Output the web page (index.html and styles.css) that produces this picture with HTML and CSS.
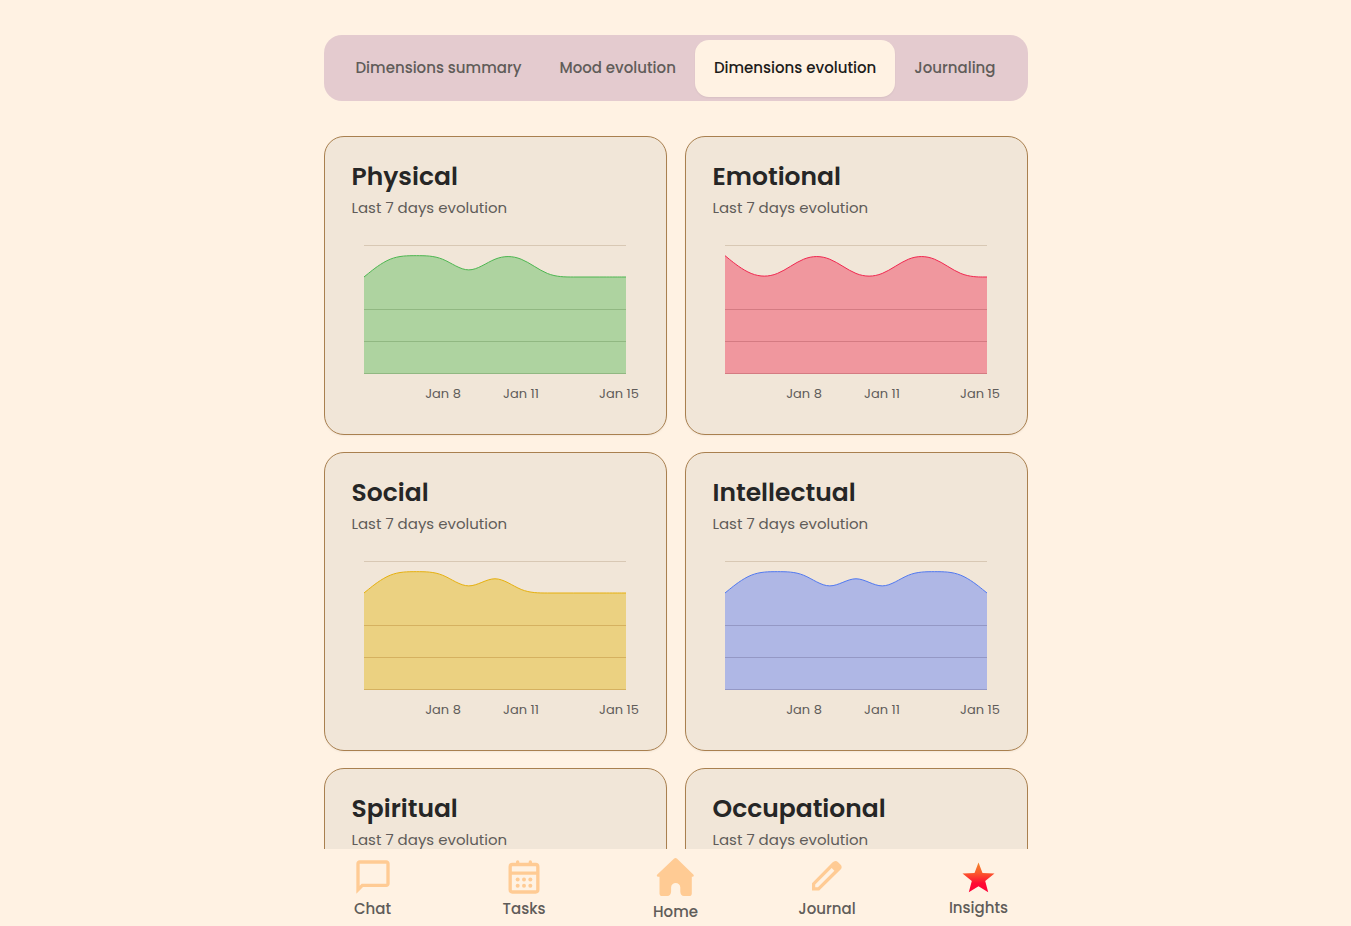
FILE: index.html
```html
<!DOCTYPE html>
<html lang="en">
<head>
<meta charset="utf-8">
<meta name="viewport" content="width=device-width, initial-scale=1">
<title>Insights</title>
<link rel="stylesheet" href="styles.css">
</head>
<body>
<main class="content">
  <div class="tabs" role="tablist">
    <button class="tab" role="tab" aria-selected="false">Dimensions summary</button>
    <button class="tab" role="tab" aria-selected="false">Mood evolution</button>
    <button class="tab tab-active" role="tab" aria-selected="true">Dimensions evolution</button>
    <button class="tab" role="tab" aria-selected="false">Journaling</button>
  </div>
  <div class="cards">
    <section class="card green">
      <h2 class="card-title">Physical</h2>
      <p class="card-subtitle">Last 7 days evolution</p>
      <svg class="chart" viewBox="0 0 287 174" data-values="9,11,11,11,9,11,11,9,9,9,9"></svg>
    </section>
    <section class="card red">
      <h2 class="card-title">Emotional</h2>
      <p class="card-subtitle">Last 7 days evolution</p>
      <svg class="chart" viewBox="0 0 287 174" data-values="11,9,9,11,11,9,9,11,11,9,9"></svg>
    </section>
    <section class="card yellow">
      <h2 class="card-title">Social</h2>
      <p class="card-subtitle">Last 7 days evolution</p>
      <svg class="chart" viewBox="0 0 287 174" data-values="9,11,11,11,9,11,9,9,9,9,9"></svg>
    </section>
    <section class="card blue">
      <h2 class="card-title">Intellectual</h2>
      <p class="card-subtitle">Last 7 days evolution</p>
      <svg class="chart" viewBox="0 0 287 174" data-values="9,11,11,11,9,11,9,11,11,11,9"></svg>
    </section>
    <section class="card green">
      <h2 class="card-title">Spiritual</h2>
      <p class="card-subtitle">Last 7 days evolution</p>
    </section>
    <section class="card red">
      <h2 class="card-title">Occupational</h2>
      <p class="card-subtitle">Last 7 days evolution</p>
    </section>
  </div>
</main>
<nav class="bottom-nav">
  <div class="nav-inner">
    <a class="nav-item" href="#chat">
      <svg class="icon" viewBox="0 0 24 24"><path fill="currentColor" d="M20 2H4c-1.100 0-2 .9-2 2v18l4-4h14c1.100 0 2-.9 2-2V4c0-1.100-.9-2-2-2zm0 14H5.200L4 17.200V4h16v12z"/></svg>
      <span>Chat</span>
    </a>
    <a class="nav-item" href="#tasks">
      <svg class="icon" viewBox="0 0 24 24"><path fill="none" stroke="currentColor" stroke-width="2" stroke-linecap="round" d="M5 4.500h14a1.300 1.300 0 0 1 1.300 1.300v13.900a1.300 1.300 0 0 1-1.300 1.300H5a1.300 1.300 0 0 1-1.300-1.300V5.800A1.300 1.300 0 0 1 5 4.500zM4 9.700h16M8.200 3v1.500M15.800 3v1.500"/><g fill="currentColor"><circle cx="8.200" cy="13.500" r="1.200"/><circle cx="12" cy="13.500" r="1.200"/><circle cx="15.800" cy="13.500" r="1.200"/><circle cx="8.200" cy="17.300" r="1.200"/><circle cx="12" cy="17.300" r="1.200"/><circle cx="15.800" cy="17.300" r="1.200"/></g></svg>
      <span>Tasks</span>
    </a>
    <a class="nav-item" href="#home">
      <svg class="icon icon-large" viewBox="0 0 46 46"><path fill="currentColor" d="M20.900 4.700a2.300 2.300 0 0 1 3.200 0L40.300 20.500c1 1 .5 2.300-.8 2.300H38.800v16.600c0 1.600-1 2.600-2.600 2.600h-5.300c-2.200 0-3.600-2-3.600-4.600v-3.800c0-6-9.200-6-9.200 0v3.800c0 2.600-1.500 4.600-3.800 4.600H9.200c-1.700 0-2.700-1-2.700-2.600V22.800H5.100c-1.300 0-1.800-1.300-.8-2.300z"/></svg>
      <span>Home</span>
    </a>
    <a class="nav-item" href="#journal">
      <svg class="icon" viewBox="0 0 40 40"><path fill="currentColor" fill-rule="evenodd" d="M5 26.200 25.400 5.500q3-3 5.700-.3l2.300 2.300q2.700 2.700-.3 5.600L12.200 33.500H5zM8.200 27.500v2.800h2.700L27.400 13.800l-2.700-2.700z"/></svg>
      <span>Journal</span>
    </a>
    <a class="nav-item" href="#insights" aria-current="page">
      <svg class="icon icon-small" viewBox="0 0 38 38"><defs><linearGradient id="star-fill" x1="0" y1="0" x2="0" y2="1"><stop offset="0" stop-color="#f2852b"/><stop offset=".35" stop-color="#fb5a2c"/><stop offset=".7" stop-color="#ff0a32"/><stop offset="1" stop-color="#ff0038"/></linearGradient></defs><path fill="url(#star-fill)" d="M18.500 4.500l4 10.500 12 .6-9.300 7.400 3 11.200-9.700-6-9.700 6 3-11.200-9.300-7.400 12-.6z"/></svg>
      <span>Insights</span>
    </a>
  </div>
</nav>
<script src="charts.js"></script>
</body>
</html>
```
FILE: styles.css
```css
* {
  box-sizing: border-box;
}

body {
  display: flex;
  flex-direction: column;
  height: 100vh;
  margin: 0;
  background: #fff2e3;
  color: #262626;
  font-family: Poppins, Inter, "Open Sans", sans-serif;
  font-size: 15px;
}

.content {
  flex: 1;
  min-height: 0;
  width: 100%;
  max-width: 704px;
  margin: 0 auto;
  padding-top: 35px;
  overflow-y: auto;
  scrollbar-width: none;
}

.tabs {
  display: flex;
  justify-content: center;
  margin-bottom: 35px;
  padding: 5px 4px 4px;
  border-radius: 18px;
  background: #e4cbcf;
}

.tab {
  padding: 15px 19px 17px;
  border: 0;
  border-radius: 14px;
  background: transparent;
  color: #605c59;
  font: inherit;
  font-weight: 500;
  line-height: 25px;
  white-space: nowrap;
}

.tab-active {
  background: #fff2e3;
  color: #1c1b1a;
  box-shadow: 0 1px 2px rgb(0 0 0 / 6%);
}

.cards {
  display: grid;
  grid-template-columns: 1fr 1fr;
  grid-auto-rows: minmax(299px, auto);
  gap: 17px 18px;
}

.card {
  padding: 26px 27px;
  border: 1px solid #a9804f;
  border-radius: 20px;
  background: #f1e6d8;
  box-shadow: 0 1px 2px rgb(0 0 0 / 5%);
}

.card-title {
  margin: 0;
  font-size: 25px;
  font-weight: 600;
  line-height: 28px;
}

.card-subtitle {
  margin: 4px 0 13px;
  color: #605c59;
  line-height: 26px;
}

.chart {
  display: block;
  width: 100%;
  overflow: visible;
}

.green { --series: #4cb650; --tint: #aed3a0; --rule: #91b882; }
.red { --series: #f0274f; --tint: #f0979e; --rule: #d47b82; }
.yellow { --series: #e6b00e; --tint: #ebd181; --rule: #d5b160; }
.blue { --series: #5078f0; --tint: #afb7e5; --rule: #9498c5; }

.chart-area {
  fill: var(--tint);
}

.chart-line {
  fill: none;
  stroke: var(--series);
}

.chart-top {
  stroke: #d8c8b4;
}

.chart-rule {
  stroke: var(--rule);
}

.chart-label {
  fill: #605c59;
  font-size: 13px;
  text-anchor: middle;
}

.bottom-nav {
  flex: none;
  background: #fff2e3;
}

.nav-inner {
  display: flex;
  align-items: center;
  justify-content: space-between;
  max-width: 704px;
  height: 77px;
  margin: 0 auto;
  padding-top: 2px;
}

.nav-item {
  display: flex;
  flex-direction: column;
  align-items: center;
  width: 98px;
  color: #605c59;
  font-weight: 500;
  line-height: 24px;
  text-decoration: none;
}

.icon {
  width: 40px;
  height: 40px;
  color: #ffcb94;
}

.icon-large {
  width: 46px;
  height: 46px;
}

.icon-small {
  width: 38px;
  height: 38px;
}
```
FILE: charts.js
```js
const LEFT = 12;
const WIDTH = 262;
const BASE = 139;
const UNIT = 32 / 3;

// Cubic B-spline through the series, written as bezier segments.
function splinePath(points) {
  const mix = (a, wa, b, wb) => [0, 1].map((k) => (a[k] * wa + b[k] * wb) / (wa + wb));
  const knot = (a, b, c) => [0, 1].map((k) => (a[k] + 4 * b[k] + c[k]) / 6);
  const last = points.length - 1;
  let d = `M${points[0]}L${mix(points[0], 5, points[1], 1)}`;
  for (let i = 1; i <= last; i++) {
    const next = points[Math.min(i + 1, last)];
    d += `C${mix(points[i - 1], 2, points[i], 1)} ${mix(points[i - 1], 1, points[i], 2)} ${knot(points[i - 1], points[i], next)}`;
  }
  return `${d}L${points[last]}`;
}

document.querySelectorAll(".chart").forEach((chart) => {
  const values = chart.dataset.values.split(",").map(Number);
  const step = WIDTH / (values.length - 1);
  const line = splinePath(values.map((v, i) => [LEFT + i * step, BASE - v * UNIT]));
  const right = LEFT + WIDTH;
  const rule = (h, name) => `<path class="${name}" d="M${LEFT} ${BASE - h + 0.5}H${right}"/>`;
  const label = (x, text) => `<text class="chart-label" x="${x}" y="164">${text}</text>`;
  chart.innerHTML =
    rule(128, "chart-top") +
    `<path class="chart-area" d="${line}V${BASE}H${LEFT}Z"/>` +
    [64, 32, 0].map((h) => rule(h, "chart-rule")).join("") +
    `<path class="chart-line" d="${line}"/>` +
    label(91, "Jan 8") + label(169, "Jan 11") + label(267, "Jan 15");
});
```
